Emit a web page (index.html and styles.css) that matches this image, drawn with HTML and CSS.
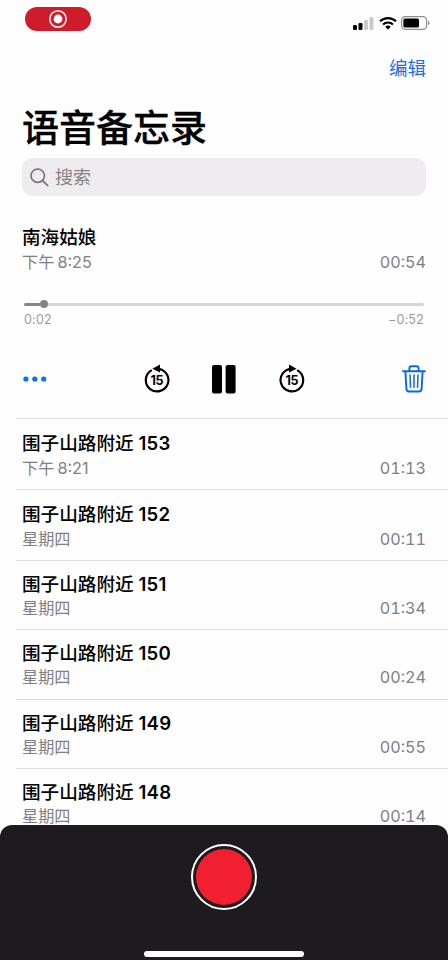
FILE: index.html
```html
<!DOCTYPE html>
<html lang="zh-CN">
<head>
<meta charset="utf-8">
<title>语音备忘录</title>
<link rel="stylesheet" href="styles.css">
</head>
<body>
<div class="app">
  <header class="status">
    <div class="rec-pill">
      <svg width="20" height="20" viewBox="0 0 20 20"><circle cx="10" cy="10" r="8.2" fill="none" stroke="#ffe9e4" stroke-width="1.7"/><circle cx="10" cy="10" r="4.4" fill="#fff"/></svg>
    </div>
    <div class="status-icons">
      <svg width="21" height="14" viewBox="0 0 21 14"><rect x="0" y="9" width="4" height="5" rx="1.2"/><rect x="5.5" y="7" width="4" height="7" rx="1.2"/><rect x="11" y="4" width="4" height="10" rx="1" fill="#c9c9ca"/><rect x="16.5" y="1" width="4" height="13" rx="1" fill="#c9c9ca"/></svg>
      <svg class="wifi" width="18" height="14" viewBox="0 0 18 14"><g fill="none" stroke="#000" stroke-width="2.2"><path d="M1 5.3a11.5 11.5 0 0 1 16 0"/><path d="M4.1 8.5a7 7 0 0 1 9.8 0"/></g><path d="M9 13.4 6.2 10.7a4.1 4.1 0 0 1 5.6 0z"/></svg>
      <svg class="battery" width="29" height="14" viewBox="0 0 29 14"><rect x=".6" y=".6" width="25" height="12.8" rx="3.6" fill="none" stroke="#8e8e90" stroke-width="1.2"/><rect x="2.4" y="2.4" width="15.6" height="9.2" rx="1.6"/><path d="M27 4.8c2 .8 2 3.6 0 4.4z" fill="#8e8e90"/></svg>
    </div>
  </header>
  <nav class="nav"><a class="edit">编辑</a></nav>
  <h1 class="heading">语音备忘录</h1>
  <div class="search">
    <svg width="19" height="19" viewBox="0 0 19 19" fill="none" stroke="#747378" stroke-width="1.6" stroke-linecap="round"><circle cx="7.7" cy="7.7" r="6.7"/><path d="m12.6 12.6 5.2 5"/></svg>
    <span>搜索</span>
  </div>

  <section class="player">
    <div class="title">南海姑娘</div>
    <div class="meta"><span>下午<i class="thin"></i>8:25</span><span class="duration">00:54</span></div>
    <div class="track"><div class="played"></div><div class="knob"></div><div class="remaining"></div></div>
    <div class="times"><span>0:02</span><span>−0:52</span></div>
    <div class="controls">
      <svg class="more" width="24" height="6" viewBox="0 0 24 6" fill="#0a6ff0"><circle cx="2.9" cy="3" r="2.6"/><circle cx="11.8" cy="3" r="2.6"/><circle cx="20.7" cy="3" r="2.6"/></svg>
      <svg class="back" width="26" height="30" viewBox="0 0 26 30"><path d="M7 6.6A11.3 11.3 0 1 0 13 4.8" fill="none" stroke="#000" stroke-width="2.2" stroke-linecap="round"/><path d="M8.4 4.7 16 .4v8.2z"/><text x="12.8" y="20.6">15</text></svg>
      <svg class="pause" width="24" height="29" viewBox="0 0 24 29"><rect x="0" y="0" width="10" height="28.6" rx="2"/><rect x="13.6" y="0" width="10" height="28.6" rx="2"/></svg>
      <svg class="forward" width="26" height="30" viewBox="0 0 26 30"><path d="M19 6.6A11.3 11.3 0 1 1 13 4.8" fill="none" stroke="#000" stroke-width="2.2" stroke-linecap="round"/><path d="M17.6 4.7 10 .4v8.2z"/><text x="12.8" y="20.6">15</text></svg>
      <svg class="trash" width="24" height="28" viewBox="0 0 24 28" fill="none" stroke="#0a66e6" stroke-width="1.9" stroke-linecap="round" stroke-linejoin="round"><path d="M1 6.2h22M7.4 6V3.4q0-2.2 2.2-2.2h4.8q2.2 0 2.2 2.2V6M3.4 6.4l1 17.5q.2 2.6 2.6 2.6h10q2.4 0 2.6-2.6l1-17.5"/><path stroke-width="1.5" d="m8 10 .5 12.3M12 10v12.3M16 10l-.5 12.3"/></svg>
    </div>
  </section>

  <main class="list">
    <article class="row tall"><div class="title">围子山路附近 <b>153</b></div><div class="meta"><span>下午<i class="thin"></i>8:21</span><span class="duration">01:13</span></div></article>
    <article class="row tall"><div class="title">围子山路附近 <b>152</b></div><div class="meta"><span>星期四</span><span class="duration">00:11</span></div></article>
    <article class="row"><div class="title">围子山路附近 <b>151</b></div><div class="meta"><span>星期四</span><span class="duration">01:34</span></div></article>
    <article class="row"><div class="title">围子山路附近 <b>150</b></div><div class="meta"><span>星期四</span><span class="duration">00:24</span></div></article>
    <article class="row"><div class="title">围子山路附近 <b>149</b></div><div class="meta"><span>星期四</span><span class="duration">00:55</span></div></article>
    <article class="row"><div class="title">围子山路附近 <b>148</b></div><div class="meta"><span>星期四</span><span class="duration">00:14</span></div></article>
  </main>

  <footer class="recorder">
    <div class="record"><div class="record-dot"></div></div>
    <div class="home"></div>
  </footer>
</div>
</body>
</html>
```
FILE: styles.css
```css
* { box-sizing: border-box; }
body {
  margin: 0;
  background: #fefefe;
  color: #000;
  font-family: Inter, "Noto Sans CJK SC", sans-serif;
}
svg { display: block; flex: none; }
.app {
  width: 448px;
  height: 960px;
  overflow: hidden;
  display: flex;
  flex-direction: column;
}
.app > * { flex: none; }

.status {
  height: 48px;
  padding: 7px 18px 0 25px;
  display: flex;
  justify-content: space-between;
}
.rec-pill {
  width: 66px;
  height: 24px;
  border-radius: 12px;
  background: #ce1c2b;
  display: flex;
  align-items: center;
  justify-content: center;
}
.status-icons { display: flex; padding-top: 9px; height: 23px; }
.wifi { margin-left: 5px; }
.battery { margin-left: 4px; }

.nav {
  height: 54px;
  padding: 7px 22px 0;
  text-align: right;
}
.edit { color: #1a6fe8; font-size: 18.5px; line-height: 27px; }
.heading {
  margin: 0;
  height: 56px;
  padding: 2px 0 0 22px;
  font-size: 37px;
  font-weight: 500;
  line-height: 50px;
  -webkit-text-stroke: .3px #000;
}
.search {
  margin: 0 22px;
  height: 38px;
  border-radius: 10px;
  background: #eeecef;
  color: #838287;
  display: flex;
  align-items: center;
  padding-left: 8px;
  gap: 6px;
  font-size: 18px;
}
.search span { margin-top: -2px; }

.title {
  font-size: 18.6px;
  font-weight: 500;
  line-height: 26px;
  height: 26px;
  white-space: nowrap;
}
.title b { font-weight: 600; letter-spacing: .2px; }
.meta {
  display: flex;
  justify-content: space-between;
  height: 24px;
  line-height: 24px;
  font-size: 16.2px;
  color: #808084;
}
.thin { display: inline-block; width: 3px; }
.duration { font-variant-numeric: tabular-nums; }

.player { height: 222px; padding: 28px 22px 0; }
.track {
  display: flex;
  align-items: center;
  height: 8px;
  margin: 26px 2px 0;
}
.played { width: 16px; height: 3px; border-radius: 2px 0 0 2px; background: #858488; }
.knob { width: 8px; height: 8px; border-radius: 50%; background: #858488; }
.remaining { flex: 1; height: 3px; border-radius: 0 2px 2px 0; background: #d6d4d8; }
.times {
  display: flex;
  justify-content: space-between;
  margin: 4px 2px 0;
  font-size: 12.5px;
  line-height: 16px;
  color: #9a999d;
  letter-spacing: .2px;
}
.controls {
  display: grid;
  grid-template-columns: 1fr 68px 67px 68px 1fr;
  align-items: center;
  justify-items: center;
  height: 30px;
  margin-top: 36px;
}
.more { justify-self: start; margin-left: 1px; }
.trash { justify-self: end; }
.controls text {
  font: 700 12.5px Inter, sans-serif;
  text-anchor: middle;
  letter-spacing: -.3px;
}

.list { height: 407px; overflow: hidden; margin-left: 16px; }
.row {
  height: 69.4px;
  border-top: 1px solid #dddce0;
  padding: 10px 22px 0 6px;
}
.row .meta { height: 22px; line-height: 22px; }
.row.tall { height: 71px; padding-top: 11px; }
.row.tall .meta { height: 24px; line-height: 24px; }

.app > .recorder {
  flex: 1;
  border-radius: 12px 12px 0 0;
  background: #1d1b20;
  display: flex;
  flex-direction: column;
  align-items: center;
  justify-content: space-between;
  padding: 19px 0 3px;
}
.record {
  width: 66px;
  height: 66px;
  border: 2.5px solid #fff;
  border-radius: 50%;
  display: flex;
  align-items: center;
  justify-content: center;
}
.record-dot { width: 56px; height: 56px; border-radius: 50%; background: #f11f2f; }
.home { width: 160px; height: 6px; border-radius: 3px; background: #fff; }
```
